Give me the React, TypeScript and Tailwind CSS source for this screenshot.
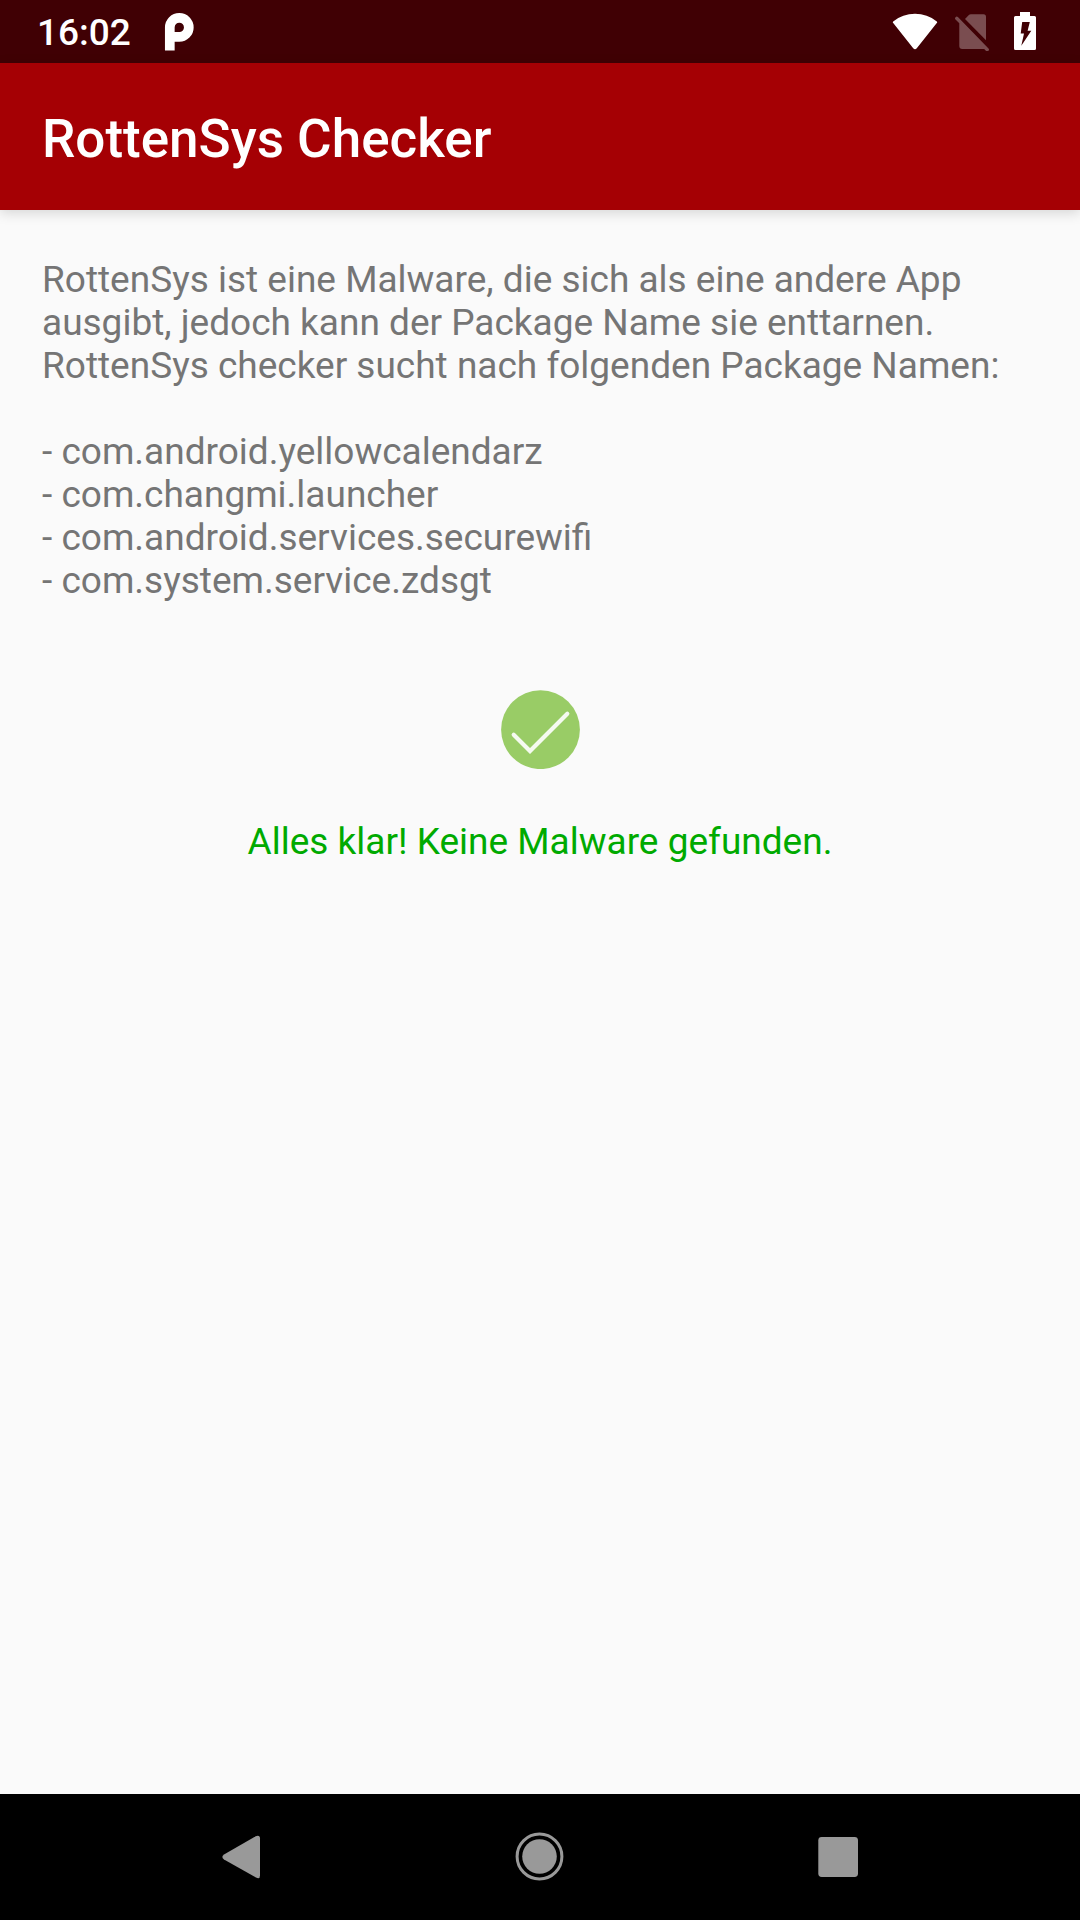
import type { ReactNode } from 'react';

const packages = [
  'com.android.yellowcalendarz',
  'com.changmi.launcher',
  'com.android.services.securewifi',
  'com.system.service.zdsgt',
];

function StatusBar() {
  return (
    <div className="flex h-[63px] items-center justify-between bg-[#400004] pl-[37px] pr-11 text-white">
      <div className="flex items-center gap-[33px]">
        <span className="pt-0.5 text-[37px] font-medium leading-[43px]">16:02</span>
        {/* Android Pie notification */}
        <svg className="h-[39px] w-[30px]" viewBox="0 0 30 39" fill="none" stroke="currentColor" strokeWidth="9.7">
          <path d="M5.8 38.4V15.4A9.5 9.5 0 1 1 15.3 24.9H5.8" />
        </svg>
      </div>

      <div className="flex items-center gap-[17px]">
        {/* Wifi */}
        <svg className="h-[39px] w-[46px]" viewBox="0 0 46 39" fill="currentColor" stroke="currentColor" strokeWidth="2" strokeLinejoin="round">
          <path d="M1.8 10.2A34 34 0 0 1 44.2 10.2L24 35.6Q23 36.8 22 35.6Z" />
        </svg>
        {/* No SIM */}
        <svg className="h-[39px] w-[42px]" viewBox="0 0 42 39" fill="currentColor" opacity="0.3">
          <path d="M10 7L13.6 3.2Q14.5 2.3 16 2.3H28.5Q31 2.3 31 4.8V28.3Z" />
          <path d="M2.9 5.1L33.5 36.5A1.7 1.7 0 0 1 31.1 38.9L29.2 37H7.3Q4.3 37 4.3 34V11.2L.5 7.5A1.7 1.7 0 0 1 2.9 5.1Z" />
        </svg>
        {/* Battery, charging */}
        <svg className="h-[39px] w-[22px]" viewBox="0 0 22 39" fill="currentColor" fillRule="evenodd">
          <path d="M6 0H16V4H20.5Q22 4 22 5.5V36.5Q22 38 20.5 38H1.5Q0 38 0 36.5V5.5Q0 4 1.5 4H6ZM8.2 10L6.7 21.4H10L7.3 33.7L17.3 18.8H13.6L15.8 10Z" />
        </svg>
      </div>
    </div>
  );
}

function NavButton({ label, children }: { label: string; children: ReactNode }) {
  return (
    <button type="button" aria-label={label} className="flex flex-1 items-center justify-center">
      <svg className="size-[50px]" viewBox="0 0 50 50" fill="currentColor">
        {children}
      </svg>
    </button>
  );
}

export default function App() {
  return (
    <div className="flex min-h-screen flex-col bg-[#fafafa] font-[Roboto,sans-serif]">
      <StatusBar />

      <header className="flex h-[147px] items-center bg-[#a50004] px-[42px] pt-1 shadow-[0_3px_12px_rgba(0,0,0,0.15)]">
        <h1 className="text-[53px] font-medium leading-[62px] text-white">RottenSys Checker</h1>
      </header>

      <main className="flex-1 px-[42px] pt-12 text-[37px] leading-[43px] text-[#757575]">
        <p>RottenSys ist eine Malware, die sich als eine andere App ausgibt, jedoch kann der Package Name sie enttarnen.</p>
        <p>RottenSys checker sucht nach folgenden Package Namen:</p>
        <ul className="mt-[43px]">
          {packages.map((name) => (
            <li key={name}>- {name}</li>
          ))}
        </ul>

        {/* Scan result */}
        <div className="mt-[88px] flex flex-col items-center gap-[51px]">
          <svg className="h-[79px] w-[80px]" viewBox="0 0 80 79" fill="none">
            <circle cx="40.5" cy="39.7" r="39.4" fill="#99cc66" />
            <path d="M13.7 44.7L30 61L67.3 23.7" stroke="#f5faf0" strokeWidth="4.2" strokeLinecap="round" />
          </svg>
          <p className="text-[#00aa00]">Alles klar! Keine Malware gefunden.</p>
        </div>
      </main>

      <nav className="flex h-[126px] bg-black px-[93px] text-[#999999]">
        <NavButton label="Zurück">
          <path d="M38.7 4.2Q43 2.6 43 6.6V43.6Q43 47.6 39 45.6L7 27.4Q3.7 25 7 22.6Z" />
        </NavButton>
        <NavButton label="Startbildschirm">
          <circle cx="24.5" cy="24.5" r="22.4" fill="none" stroke="currentColor" strokeWidth="3" />
          <circle cx="24.5" cy="24.5" r="17.3" />
        </NavButton>
        <NavButton label="Letzte Apps">
          <rect x="5.3" y="5.1" width="39.7" height="39.8" rx="3.4" />
        </NavButton>
      </nav>
    </div>
  );
}
